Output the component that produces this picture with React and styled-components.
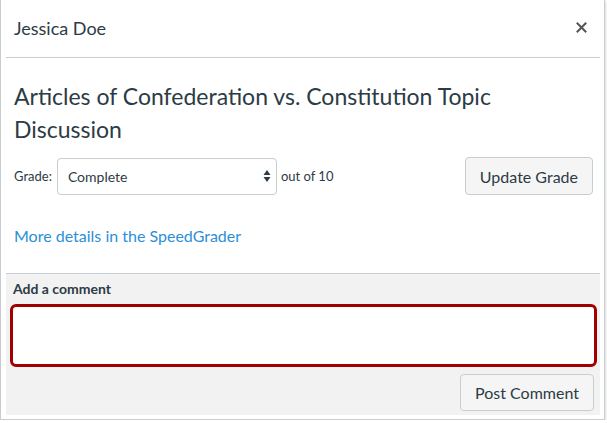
import React from "react";
import styled, { createGlobalStyle } from "styled-components";

const Global = createGlobalStyle`
  html, body { margin: 0; padding: 0; background: #fff; }
  body { font-family: Lato, "Noto Sans", sans-serif; color: #2d3b45; }
  * { box-sizing: border-box; }
`;

const Frame = styled.div`
  width: 605px;
  height: 420px;
  border: 1px solid #c7cdd1;
  border-top: none;
  box-shadow: 0 1px 3px rgba(0,0,0,0.25);
  padding: 0 4px 4px 5px;
  display: flex;
  flex-direction: column;
  background: #fff;
`;

const Header = styled.div`
  height: 58px;
  display: flex;
  align-items: center;
  justify-content: space-between;
  padding: 0 12px 2px 8px;
  border-bottom: 1px solid #c7cdd1;
`;

const Name = styled.div`
  font-size: 18px;
  color: #2d3b45;
`;

const Close = styled.button`
  border: none;
  background: none;
  padding: 0;
  width: 14px;
  height: 14px;
  display: flex;
  align-items: center;
  justify-content: center;
  cursor: pointer;
`;

const Body = styled.div`
  padding: 22px 7px 0 8px;
  display: flex;
  flex-direction: column;
`;

const Title = styled.h2`
  margin: 0;
  font-size: 23px;
  font-weight: 400;
  line-height: 33px;
  color: #2d3b45;
`;

const GradeRow = styled.div`
  margin-top: 11px;
  display: flex;
  align-items: center;
  justify-content: space-between;
`;

const GradeLeft = styled.div`
  display: flex;
  align-items: center;
  font-size: 13px;
`;

const Label = styled.span`
  margin-right: 5px;
`;

const SelectBox = styled.div`
  position: relative;
  width: 220px;
  height: 37px;
  border: 1px solid #c7cdd1;
  border-radius: 4px;
  background: #fff;
  display: flex;
  align-items: center;
  padding: 0 10px;
  font-size: 14px;
  margin-right: 4px;
`;

const Arrows = styled.svg`
  position: absolute;
  right: 5px;
  top: 50%;
  transform: translateY(-50%);
`;

const Button = styled.button`
  font-family: Lato, "Noto Sans", sans-serif;
  font-size: 16px;
  color: #2d3b45;
  background: #f5f5f5;
  border: 1px solid #c7cdd1;
  border-radius: 4px;
  height: ${p => p.$h || 38}px;
  padding: 0 ${p => p.$px || 14}px;
`;

const Link = styled.a`
  margin-top: 30px;
  font-size: 16px;
  color: #2b8fd8;
  text-decoration: none;
  line-height: 22px;
`;

const CommentArea = styled.div`
  margin-top: 26px;
  flex: 1;
  background: #f2f2f2;
  border-top: 1px solid #c7cdd1;
  padding: 6px 3px 4px 4px;
  display: flex;
  flex-direction: column;
`;

const CommentLabel = styled.label`
  font-size: 14px;
  font-weight: 700;
  padding-left: 3px;
  line-height: 18px;
`;

const TextArea = styled.div`
  margin-top: 6px;
  height: 63px;
  border: 3px solid #a00000;
  border-radius: 6px;
  background: #fff;
`;

const Actions = styled.div`
  margin-top: 7px;
  display: flex;
  justify-content: flex-end;
  padding-right: 3px;
`;

export default function App() {
  return (
    <>
      <Global />
      <Frame>
        <Header>
          <Name>Jessica Doe</Name>
          <Close aria-label="Close">
            <svg width="11" height="11" viewBox="0 0 11 11">
              <path d="M1.5 1.5 L9.5 9.5 M9.5 1.5 L1.5 9.5" stroke="#555" strokeWidth="2" strokeLinecap="square" />
            </svg>
          </Close>
        </Header>
        <Body>
          <Title>Articles of Confederation vs. Constitution Topic Discussion</Title>
          <GradeRow>
            <GradeLeft>
              <Label>Grade:</Label>
              <SelectBox>
                Complete
                <Arrows width="8" height="14" viewBox="0 0 8 14">
                  <path d="M4 1 L7.5 6 H0.5 Z" fill="#2d3b45" />
                  <path d="M4 13 L7.5 8 H0.5 Z" fill="#2d3b45" />
                </Arrows>
              </SelectBox>
              <span>out of 10</span>
            </GradeLeft>
            <Button>Update Grade</Button>
          </GradeRow>
          <Link href="#">More details in the SpeedGrader</Link>
        </Body>
        <CommentArea>
          <CommentLabel>Add a comment</CommentLabel>
          <TextArea />
          <Actions>
            <Button $h={37}>Post Comment</Button>
          </Actions>
        </CommentArea>
      </Frame>
    </>
  );
}
